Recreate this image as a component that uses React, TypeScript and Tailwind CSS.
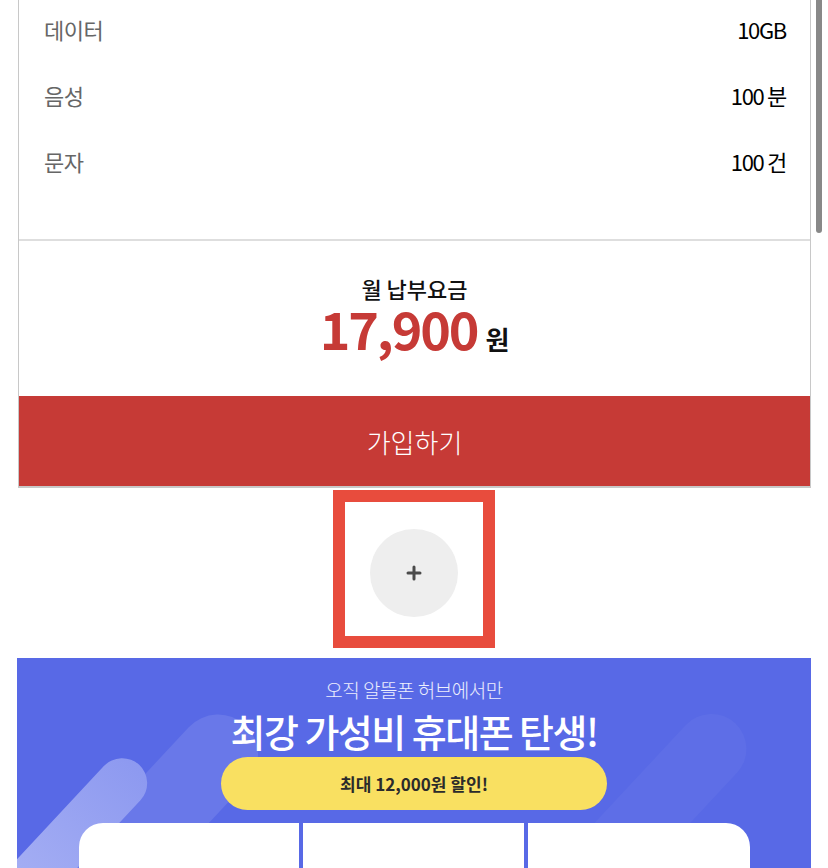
import React from "react"

const specs = [
  { label: "데이터", value: "10GB" },
  { label: "음성", value: "100 분" },
  { label: "문자", value: "100 건" },
]

export default function App() {
  return (
    <div className="relative w-[828px] h-[868px] overflow-hidden bg-white font-['Noto_Sans_CJK_KR','Noto_Sans',sans-serif]">
      {/* plan card */}
      <div className="ml-[18px] w-[793px] border-x border-b-2 border-[#c8c8c8]">
        <div className="flex flex-col gap-[26px] pt-[9px] pb-[58px] pl-[25px] pr-[24px] border-b-2 border-[#dedede]">
          {specs.map((s) => (
            <div key={s.label} className="flex h-[40px] items-center justify-between">
              <span className="text-[22px] text-[#666] tracking-tight">{s.label}</span>
              <span className="text-[22px] text-black tracking-[-0.06em]">{s.value}</span>
            </div>
          ))}
        </div>

        <div className="flex h-[155px] flex-col items-center pt-[36px]">
          <p className="text-[22px] leading-[22px] font-medium text-[#111]">월 납부요금</p>
          <div className="mt-[3px] flex items-baseline gap-[8px]">
            <span className="text-[52px] leading-[52px] font-bold tracking-[-0.04em] text-[#c63a36]">17,900</span>
            <span className="text-[26px] leading-[26px] font-bold text-[#111]">원</span>
          </div>
        </div>

        <button className="flex h-[90px] w-full items-center justify-center bg-[#c63a36] text-[26px] font-light text-white">
          가입하기
        </button>
      </div>

      {/* add more */}
      <div className="flex justify-center pt-[2px] pb-[10px]">
        <div className="flex h-[158px] w-[162px] items-center justify-center border-[12px] border-[#e84c3d] bg-white pt-[8px]">
          <div className="flex h-[88px] w-[88px] items-center justify-center rounded-full bg-[#eeeeee]">
            <svg width="16" height="16" viewBox="0 0 16 16">
              <path d="M8 2v12M2 8h12" stroke="#4a4a4a" strokeWidth="3" strokeLinecap="round" />
            </svg>
          </div>
        </div>
      </div>

      {/* promo banner */}
      <div className="relative ml-[17px] w-[794px] h-[220px] overflow-hidden bg-[#5869e6]">
        <div className="absolute left-[-24px] top-[137px] h-[80px] w-[300px] -rotate-[47deg] rounded-full bg-white/10" />
        <div className="absolute left-[-46px] top-[155px] h-[50px] w-[200px] -rotate-[47deg] rounded-full bg-gradient-to-r from-[#a9b2f4] to-[#8d99f0]" />
        <div className="absolute left-[466px] top-[140px] h-[70px] w-[300px] -rotate-[47deg] rounded-full bg-white/[0.04]" />

        <div className="relative flex flex-col items-center pt-[20px]">
          <p className="text-[19px] leading-[24px] font-light tracking-tight text-white/90">오직 알뜰폰 허브에서만</p>
          <h1 className="mt-[8px] text-[38px] leading-[42px] font-medium tracking-[-0.04em] text-white">최강 가성비 휴대폰 탄생!</h1>
          <div className="mt-[5px] flex h-[53px] w-[386px] items-center justify-center rounded-full bg-[#f9e061] text-[17px] font-bold text-[#2b2b2b]">
            최대 12,000원 할인!
          </div>
          <div className="mt-[13px] flex gap-[4px]">
            <div className="h-[60px] w-[220px] rounded-tl-[24px] bg-white" />
            <div className="h-[60px] w-[221px] bg-white" />
            <div className="h-[60px] w-[222px] rounded-tr-[24px] bg-white" />
          </div>
        </div>
      </div>

      {/* scrollbar */}
      <div className="absolute right-[6px] top-0 h-[233px] w-[6px] rounded-b-full bg-[#888]" />
    </div>
  )
}
